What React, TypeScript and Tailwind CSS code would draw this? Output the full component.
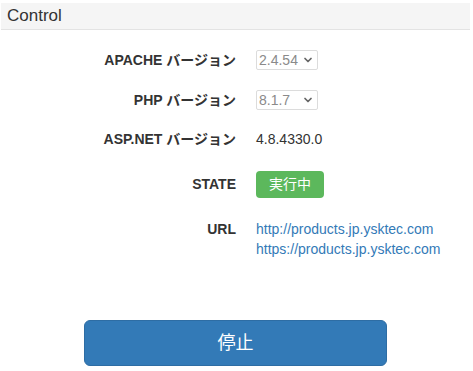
import { ChevronDown } from 'lucide-react';

const FONT = "font-['Liberation_Sans','Noto_Sans_CJK_JP',sans-serif]";
const LABEL = 'w-[236px] shrink-0 text-right text-[14px] font-bold text-[#333]';

function FakeSelect({ value }: { value: string }) {
  return (
    <div className="ml-[20px] flex h-[20px] w-[62px] items-center justify-between rounded-[2px] border border-[#dcdcdc] bg-white pl-[2px] pr-[3px] text-[14px] text-[#8a8a8a]">
      <span>{value}</span>
      <ChevronDown size={12} strokeWidth={3.5} className="text-[#666]" />
    </div>
  );
}

export default function App() {
  return (
    <div className={`${FONT} w-[473px] h-[371px] bg-white text-[#333]`}>
      <div className="ml-[1px] mt-[3px] flex h-[27px] w-[469px] items-center border-b border-[#e3e3e3] bg-[#f5f5f5] pl-[6px] text-[17px] text-[#333]">
        Control
      </div>

      <div className="mt-[20px] flex flex-col">
        <div className="flex h-[20px] items-center">
          <span className={LABEL}>APACHE バージョン</span>
          <FakeSelect value="2.4.54" />
        </div>
        <div className="mt-[20px] flex h-[20px] items-center">
          <span className={LABEL}>PHP バージョン</span>
          <FakeSelect value="8.1.7" />
        </div>
        <div className="mt-[19px] flex h-[20px] items-center">
          <span className={LABEL}>ASP.NET バージョン</span>
          <span className="ml-[20px] text-[14px] text-[#333]">4.8.4330.0</span>
        </div>
        <div className="mt-[22px] flex h-[27px] items-center">
          <span className={LABEL}>STATE</span>
          <span className="ml-[20px] flex h-[27px] w-[68px] items-center justify-center rounded-[4px] bg-[#5cb85c] text-[14px] text-white">
            実行中
          </span>
        </div>
        <div className="mt-[21px] flex items-start">
          <span className={`${LABEL} leading-[20px]`}>URL</span>
          <div className="ml-[20px] flex flex-col text-[14px] leading-[20px] text-[#337ab7]">
            <a href="#">http://products.jp.ysktec.com</a>
            <a href="#">https://products.jp.ysktec.com</a>
          </div>
        </div>
      </div>

      <div className="mt-[61px] pl-[84px]">
        <button className="flex h-[46px] w-[303px] items-center justify-center rounded-[6px] border border-[#2e6da4] bg-[#337ab7] text-[18px] text-white">
          停止
        </button>
      </div>
    </div>
  );
}
